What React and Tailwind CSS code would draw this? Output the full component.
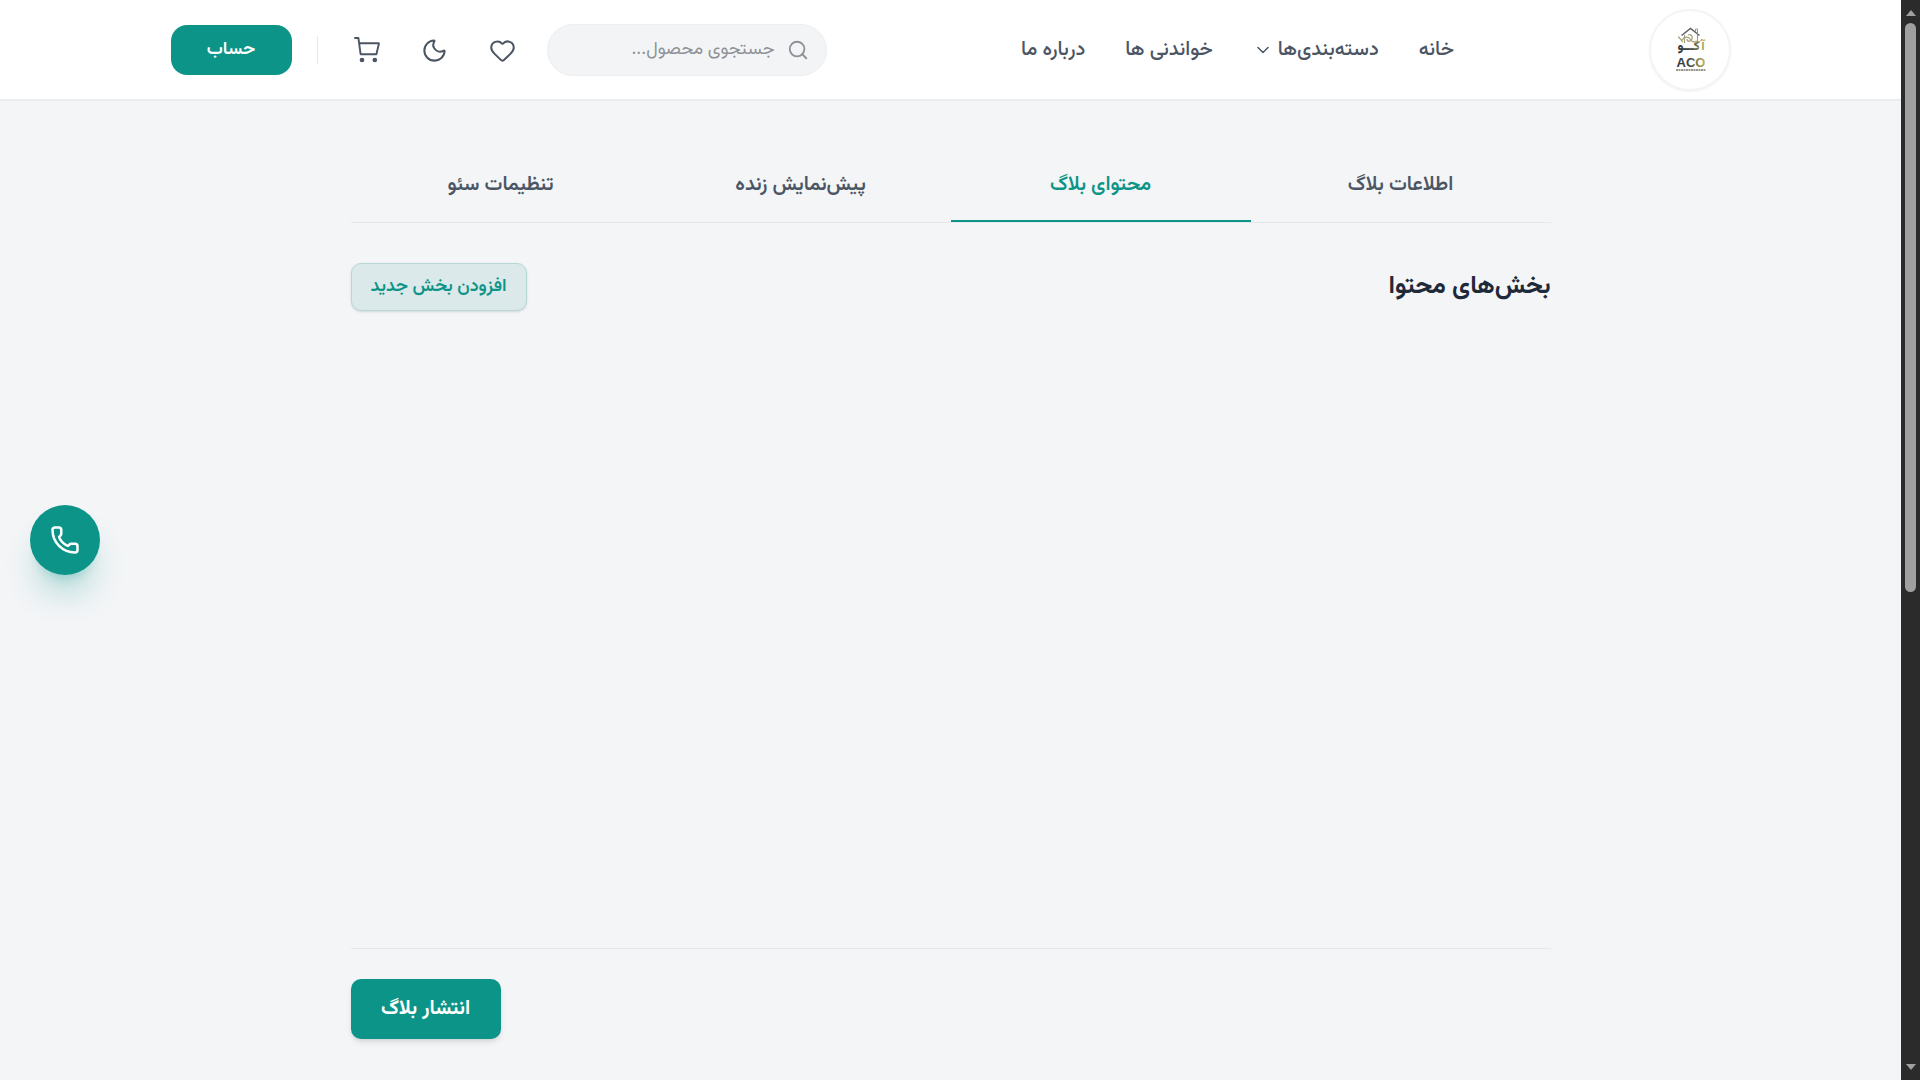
import React, { useState } from 'react';
import { Search, Heart, Moon, Phone, ChevronDown } from 'lucide-react';

const navLinks = [
    { name: 'خانه' },
    { name: 'دسته‌بندی‌ها', hasMenu: true },
    { name: 'خواندنی ها' },
    { name: 'درباره ما' },
];

const tabs = ['اطلاعات بلاگ', 'محتوای بلاگ', 'پیش‌نمایش زنده', 'تنظیمات سئو'];

const CartIcon = () => (
    <svg width="28" height="28" viewBox="0 0 28 28" fill="none" stroke="currentColor" strokeWidth="1.9" strokeLinecap="round" strokeLinejoin="round">
        <path d="M2 2h3.4l2.2 16.2h15.8l2.6-10.9H6.2" />
        <circle cx="9" cy="24" r="1.4" fill="currentColor" />
        <circle cx="21.8" cy="24" r="1.4" fill="currentColor" />
    </svg>
);

const Logo = () => (
    <a href="#" aria-label="ACO" className="flex size-[82px] items-center justify-center rounded-full border-2 border-gray-100 bg-white shadow-xs">
        <svg width="36" height="46" viewBox="0 0 36 46" fill="none">
            <defs>
                <linearGradient id="gold" x1="0" x2="1" y1="0" y2="0">
                    <stop offset="0" stopColor="#30363d" />
                    <stop offset="0.5" stopColor="#4a4c46" />
                    <stop offset="1" stopColor="#c9bc5a" />
                </linearGradient>
            </defs>
            <path d="M9.5 8.5 18.5 1.5l9 7" stroke="#5d6066" strokeWidth="1.4" />
            <path d="M23.5 5v-3h2v5M12.5 8v8M25.5 8v8" stroke="#9d9a79" strokeWidth="1" />
            <path d="M6 10c2 0 3 4 5 5M10 13c2-3 6-4 8-1s4 4 7 2M16 8c3-1 5 1 4 4s-5 3-5 0" stroke="#a9a37d" strokeWidth="1.3" />
            <text x="19" y="23" textAnchor="middle" fill="url(#gold)" className="font-['Vazirmatn','DejaVu_Sans',sans-serif] text-[13px] font-extrabold">آکـــو</text>
            <text x="19" y="40" textAnchor="middle" fill="url(#gold)" className="font-['Liberation_Sans',sans-serif] text-[13px] font-bold">ACO</text>
            <path d="M4 43h30" stroke="#77776c" strokeWidth="1.5" strokeDasharray="2 0.5" />
        </svg>
    </a>
);

const Header = () => (
    <header className="border-b-2 border-[#eaecef] bg-white">
        <div className="mx-auto flex max-w-[1560px] items-center justify-between pt-[9px] pb-2">
            <Logo />

            <nav className="flex items-center gap-10 text-xl font-medium text-[#4b5563]">
                {navLinks.map(link => (
                    <a key={link.name} href="#" className="flex items-center gap-[5px]">
                        {link.name}
                        {link.hasMenu && <ChevronDown size={20} strokeWidth={1.8} />}
                    </a>
                ))}
            </nav>

            <div className="flex items-center gap-5">
                <label className="flex h-[52px] w-[280px] items-center gap-3 rounded-full border border-[#eceef0] bg-[#f3f4f6] px-[17px]">
                    <Search size={22} strokeWidth={2} className="shrink-0 text-[#8e9298]" />
                    <input
                        type="text"
                        aria-label="جستجو"
                        placeholder="جستجوی محصول..."
                        className="w-full min-w-0 bg-transparent text-lg outline-none placeholder:text-[#8e9298]"
                    />
                </label>
                <button aria-label="علاقه‌مندی‌ها" className="flex size-12 items-center justify-center text-[#4b5563]">
                    <Heart size={27} strokeWidth={1.8} />
                </button>
                <button aria-label="حالت تاریک" className="flex size-12 items-center justify-center text-[#4b5563]">
                    <Moon size={27} strokeWidth={1.8} />
                </button>
                <button aria-label="سبد خرید" className="flex size-12 items-center justify-center text-[#4b5563]">
                    <CartIcon />
                </button>
                <div className="mx-[5px] h-7 w-px bg-gray-200" />
                <button className="h-[50px] w-[121px] rounded-2xl bg-[#0d9488] text-lg font-semibold text-white">حساب</button>
            </div>
        </div>
    </header>
);

const Scrollbar = () => (
    <div aria-hidden="true" className="flex w-[19px] shrink-0 flex-col items-center justify-between bg-[#2b2b2b] py-2.5">
        <svg width="10" height="6" viewBox="0 0 10 6" fill="#a0a0a0"><path d="M0 6 5 0l5 6z" /></svg>
        <div className="my-[7px] flex w-[11px] flex-1 flex-col">
            <div className="h-[55%] rounded-full bg-[#a0a0a0]" />
        </div>
        <svg width="10" height="6" viewBox="0 0 10 6" fill="#a0a0a0"><path d="M0 0 5 6l5-6z" /></svg>
    </div>
);

const App = () => {
    const [activeTab, setActiveTab] = useState(1);

    return (
        <div className="flex h-screen bg-[#f3f5f7] font-['Vazirmatn','DejaVu_Sans',sans-serif]">
            <div dir="rtl" className="flex min-w-0 flex-1 flex-col overflow-hidden">
                <Header />

                <main className="mx-auto flex w-full max-w-[1200px] flex-1 flex-col pt-[45px] pb-[41px]">
                    <div role="tablist" className="grid grid-cols-4 border-b border-gray-200">
                        {tabs.map((tab, i) => (
                            <button
                                key={tab}
                                role="tab"
                                aria-selected={activeTab === i}
                                onClick={() => setActiveTab(i)}
                                className={`h-[76px] border-b-2 pt-1 text-xl font-semibold ${activeTab === i ? 'border-[#0d9488] text-[#0d9488]' : 'border-transparent text-[#4b5563]'}`}
                            >
                                {tab}
                            </button>
                        ))}
                    </div>

                    <section className="flex flex-1 flex-col pt-10">
                        <div className="flex items-center justify-between">
                            <h2 className="text-[25px] font-bold text-gray-800">بخش‌های محتوا</h2>
                            <button className="h-12 rounded-[10px] border border-[#b5d8d6] bg-[#dce9ea] px-[19px] text-lg font-semibold text-[#0d9488] shadow-sm">
                                افزودن بخش جدید
                            </button>
                        </div>
                    </section>

                    <div className="flex justify-end border-t border-gray-200 pt-[30px]">
                        <button className="h-[60px] w-[150px] rounded-[10px] bg-[#0d9488] text-xl font-bold text-white shadow-md">
                            انتشار بلاگ
                        </button>
                    </div>
                </main>
            </div>

            <a
                href="tel:"
                aria-label="تماس"
                className="fixed top-1/2 left-[30px] flex size-[70px] -translate-y-1/2 items-center justify-center rounded-full bg-[#0d9488] text-white shadow-[0_25px_31px_-6px_rgba(13,148,136,0.25),0_10px_12px_-8px_rgba(13,148,136,0.3)]"
            >
                <Phone size={30} strokeWidth={2} />
            </a>

            <Scrollbar />
        </div>
    );
};

export default App;
